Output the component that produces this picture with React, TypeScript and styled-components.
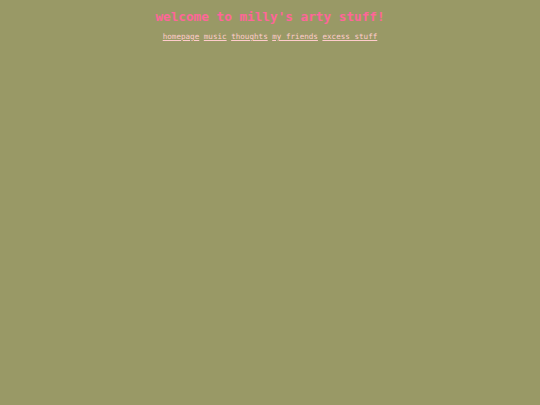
import * as React from "react";
import styled, { createGlobalStyle } from "styled-components";

const GlobalStyle = createGlobalStyle`
  html, body {
    margin: 0;
    padding: 0;
    background: #999966;
  }
  body {
    font-family: "DejaVu Sans Mono", "Liberation Mono", monospace;
  }
`;

const Page = styled.div`
  width: 540px;
  height: 405px;
  display: flex;
  flex-direction: column;
  align-items: center;
  padding-top: 9px;
  box-sizing: border-box;
`;

const Title = styled.h1`
  margin: 0;
  font-size: 12.7px;
  line-height: 16px;
  font-weight: 700;
  color: #ff6699;
`;

const Nav = styled.nav`
  display: flex;
  gap: 4.5px;
  margin-top: 7px;
`;

const NavLink = styled.a`
  font-size: 7.6px;
  line-height: 10px;
  color: #ffcccc;
  text-decoration: underline;
`;

const links = ["homepage", "music", "thoughts", "my friends", "excess stuff"];

export default function App() {
  return (
    <>
      <GlobalStyle />
      <Page>
        <Title>welcome to milly's arty stuff!</Title>
        <Nav>
          {links.map((l) => (
            <NavLink key={l} href="#">
              {l}
            </NavLink>
          ))}
        </Nav>
      </Page>
    </>
  );
}
